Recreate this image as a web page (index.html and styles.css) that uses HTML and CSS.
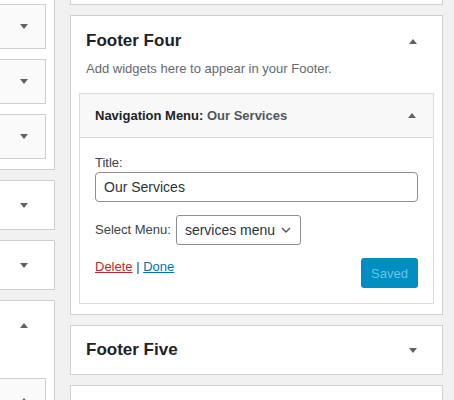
FILE: index.html
```html
<!DOCTYPE html>
<html>
<head>
<meta charset="utf-8">
<link rel="stylesheet" href="styles.css">
</head>
<body>
<div class="page">
  <div class="col-left">
    <div class="lbox lbox-first">
      <div class="ibox"><span class="arrow down"></span></div>
      <div class="ibox"><span class="arrow down"></span></div>
      <div class="ibox"><span class="arrow down"></span></div>
    </div>
    <div class="lbox lbox-closed"><span class="arrow down"></span></div>
    <div class="lbox lbox-closed"><span class="arrow down"></span></div>
    <div class="lbox lbox-open">
      <div class="lhead"><span class="arrow up"></span></div>
      <div class="ibox ibox-open"><span class="arrow up"></span></div>
    </div>
  </div>
  <div class="col-right">
    <div class="sidebar sidebar-stub"></div>
    <div class="sidebar sidebar-open">
      <div class="sidebar-head head-open">
        <h2 class="sidebar-title">Footer Four</h2>
        <span class="arrow up arrow-side"></span>
      </div>
      <p class="desc">Add widgets here to appear in your Footer.</p>
      <div class="widget">
        <div class="widget-top">
          <h3 class="widget-title">Navigation Menu:<span class="in-title"> Our Services</span></h3>
          <span class="arrow up arrow-widget"></span>
        </div>
        <div class="widget-inside">
          <label class="field-label">Title:</label>
          <input class="text-input" type="text" value="Our Services">
          <div class="select-row">
            <label class="field-label">Select Menu:</label>
            <div class="select">
              <span>services menu</span>
              <svg class="chev" width="10" height="6" viewBox="0 0 10 6"><path d="M1 1 L5 5 L9 1" fill="none" stroke="#50575e" stroke-width="1.4"/></svg>
            </div>
          </div>
          <div class="actions">
            <div class="links"><a class="link-delete" href="#">Delete</a> | <a class="link-done" href="#">Done</a></div>
            <button class="btn-saved">Saved</button>
          </div>
        </div>
      </div>
    </div>
    <div class="sidebar sidebar-closed">
      <div class="sidebar-head head-closed">
        <h2 class="sidebar-title">Footer Five</h2>
        <span class="arrow down arrow-side"></span>
      </div>
    </div>
    <div class="sidebar sidebar-next"></div>
  </div>
</div>
</body>
</html>
```

FILE: styles.css
```css
* { box-sizing: border-box; }
html, body { margin: 0; padding: 0; }
body {
  background: #f1f1f1;
  font-family: "Liberation Sans", Arial, sans-serif;
  color: #3c434a;
  width: 454px;
  height: 400px;
  overflow: hidden;
}
.page {
  display: flex;
  align-items: flex-start;
  height: 400px;
  overflow: hidden;
}
.col-left {
  width: 65px;
  margin-left: -10px;
  flex: none;
  display: flex;
  flex-direction: column;
  gap: 10px;
}
.col-right {
  width: 373px;
  margin-left: 15px;
  flex: none;
  display: flex;
  flex-direction: column;
  gap: 10px;
}
.arrow {
  display: block;
  width: 0;
  height: 0;
  border-left: 4px solid transparent;
  border-right: 4px solid transparent;
}
.arrow.down { border-top: 5px solid #5f6369; }
.arrow.up { border-bottom: 5px solid #5f6369; }

/* left column */
.lbox {
  background: #fff;
  border: 1px solid #ccd0d4;
}
.lbox-first {
  margin-top: -7px;
  padding: 10px 8px 10px 0;
  display: flex;
  flex-direction: column;
  gap: 10px;
}
.ibox {
  height: 45px;
  background: #fafafa;
  border: 1px solid #ccd0d4;
  display: flex;
  align-items: center;
  justify-content: flex-end;
  padding-right: 17px;
}
.lbox-closed {
  height: 50px;
  display: flex;
  align-items: center;
  justify-content: flex-end;
  padding-right: 26px;
}
.lbox-open {
  height: 100px;
  padding-right: 8px;
  overflow: hidden;
  border-bottom: 0;
}
.lhead {
  height: 48px;
  display: flex;
  align-items: center;
  justify-content: flex-end;
  padding-right: 18px;
}
.ibox-open {
  margin-top: 29px;
}

/* right column */
.sidebar {
  background: #fff;
  border: 1px solid #ccd0d4;
}
.sidebar-stub {
  height: 21px;
  margin-top: -16px;
}
.sidebar-head {
  display: flex;
  align-items: center;
  justify-content: space-between;
  padding-left: 15px;
}
.head-open { padding-top: 13px; }
.head-closed { height: 48px; }
.sidebar-title {
  margin: 0;
  font-size: 17px;
  line-height: 24px;
  font-weight: 700;
  color: #1d2327;
}
.arrow-side { margin-right: 25px; }
.desc {
  margin: 7px 0 0 15px;
  font-size: 13px;
  line-height: 18px;
  color: #646970;
}
.sidebar-open { padding-bottom: 10px; }
.widget {
  margin: 15px 8px 0 8px;
  border: 1px solid #dcdcde;
  background: #fff;
}
.widget-top {
  height: 44px;
  background: #f8f8f8;
  border-bottom: 1px solid #dcdcde;
  display: flex;
  align-items: center;
  justify-content: space-between;
  padding-left: 15px;
}
.widget-title {
  margin: 0;
  font-size: 13px;
  font-weight: 700;
  color: #1d2327;
}
.in-title { color: #50575e; }
.arrow-widget { margin-right: 17px; }
.widget-inside {
  padding: 16px 15px 15px 15px;
}
.field-label {
  display: block;
  font-size: 13px;
  line-height: 18px;
  color: #3c434a;
}
.text-input {
  display: block;
  width: 100%;
  height: 30px;
  margin: 0;
  padding: 0 8px;
  border: 1px solid #8c8f94;
  border-radius: 4px;
  font-family: inherit;
  font-size: 14px;
  color: #2c3338;
  background: #fff;
  outline: none;
}
.select-row {
  display: flex;
  align-items: center;
  gap: 5px;
  margin-top: 13px;
}
.select {
  width: 125px;
  height: 30px;
  border: 1px solid #8c8f94;
  border-radius: 3px;
  display: flex;
  align-items: center;
  justify-content: space-between;
  padding: 0 9px 0 8px;
  font-size: 14px;
  color: #2c3338;
  background: #fff;
}
.chev { display: block; }
.actions {
  margin-top: 13px;
  display: flex;
  justify-content: space-between;
  align-items: flex-start;
}
.links {
  font-size: 13px;
  line-height: 18px;
  color: #3c434a;
}
.link-delete { color: #b32d2e; }
.link-done { color: #0073aa; }
.btn-saved {
  width: 57px;
  height: 30px;
  border: 0;
  border-radius: 3px;
  background: #008ec2;
  color: #66c6e4;
  font-family: inherit;
  font-size: 13px;
  padding: 0;
}
.sidebar-next { height: 15px; border-bottom: 0; }
```
